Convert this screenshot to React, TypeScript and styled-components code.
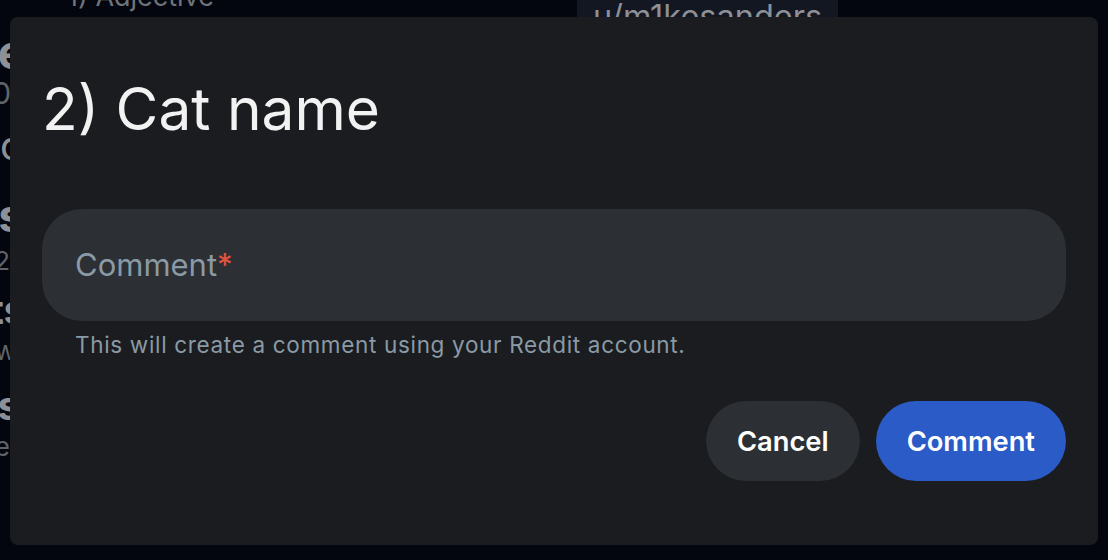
import React from "react";
import styled, { createGlobalStyle } from "styled-components";

const Global = createGlobalStyle`
  html, body { margin: 0; padding: 0; }
  body {
    background: #04060f;
    font-family: Inter, "Noto Sans", "Liberation Sans", sans-serif;
    overflow: hidden;
    width: 1108px;
    height: 560px;
  }
`;

const Page = styled.div`
  position: relative;
  width: 1108px;
  height: 560px;
  overflow: hidden;
  display: flex;
`;

const SideList = styled.div`
  width: 10px;
  flex-shrink: 0;
  overflow: hidden;
  display: flex;
  flex-direction: column;
  align-items: flex-end;
  color: #8a8e95;
  white-space: nowrap;
`;

const SideItem = styled.div<{ $size: number; $top: number; $cut: number; $bold?: boolean; $dim?: boolean }>`
  font-size: ${(p) => p.$size}px;
  line-height: ${(p) => p.$size}px;
  font-weight: ${(p) => (p.$bold ? 700 : 400)};
  margin-top: ${(p) => p.$top}px;
  margin-right: -${(p) => p.$cut}px;
  color: ${(p) => (p.$dim ? "#5f636a" : "#8d9197")};
`;

const Main = styled.div`
  flex: 1;
  display: flex;
  align-items: flex-start;
`;

const Heading = styled.div`
  margin-left: 57px;
  margin-top: -18px;
  font-size: 27px;
  color: #6f737a;
  line-height: 30px;
`;

const UserTag = styled.div`
  margin-left: 363px;
  margin-top: -3px;
  background: #131722;
  color: #8d9097;
  font-size: 32.5px;
  line-height: 40px;
  padding: 0 16px;
`;

const Dialog = styled.div`
  position: absolute;
  left: 10px;
  top: 17px;
  width: 1088px;
  height: 528px;
  box-sizing: border-box;
  background: #1a1c1f;
  border-radius: 8px;
  padding: 58px 32px 0 32px;
  display: flex;
  flex-direction: column;
`;

const Title = styled.h1`
  margin: 0;
  font-size: 58.6px;
  font-weight: 400;
  line-height: 68px;
  color: #f2f2f2;
`;

const Field = styled.div`
  margin-top: 66px;
  height: 112px;
  border-radius: 40px;
  background: #2c3034;
  display: flex;
  align-items: center;
  padding: 0 33px;
  box-sizing: border-box;
`;

const Placeholder = styled.span`
  font-size: 31px;
  line-height: 36px;
  color: #8a9aa6;
`;

const Required = styled.span`
  color: #e5533f;
`;

const Helper = styled.div`
  margin: 10px 0 0 33px;
  font-size: 22.5px;
  line-height: 28px;
  letter-spacing: 0.67px;
  color: #8a9aa6;
`;

const Actions = styled.div`
  margin-top: 42px;
  display: flex;
  justify-content: flex-end;
  gap: 16px;
`;

const Button = styled.button<{ $primary?: boolean }>`
  height: 80px;
  border: none;
  border-radius: 40px;
  padding: 0 31px;
  font-family: inherit;
  font-size: 27.3px;
  font-weight: 600;
  color: #ffffff;
  background: ${(p) => (p.$primary ? "#2a5bc6" : "#2c3034")};
  cursor: pointer;
`;

export default function App() {
  return (
    <>
      <Global />
      <Page>
        <SideList>
          <SideItem $size={48} $top={28} $cut={16} $bold>Vibe</SideItem>
          <SideItem $size={30} $top={2} $cut={12} $dim>(0)</SideItem>
          <SideItem $size={40} $top={18} $cut={14}>co</SideItem>
          <SideItem $size={46} $top={26} $cut={14} $bold>Posts</SideItem>
          <SideItem $size={26} $top={10} $cut={0} $dim>12</SideItem>
          <SideItem $size={40} $top={16} $cut={16} $bold>Comments</SideItem>
          <SideItem $size={26} $top={8} $cut={6} $dim>view</SideItem>
          <SideItem $size={40} $top={22} $cut={10} $bold>Saves</SideItem>
          <SideItem $size={26} $top={8} $cut={0} $dim>save</SideItem>
        </SideList>
        <Main>
          <Heading>1) Adjective</Heading>
          <UserTag>u/m1kesanders</UserTag>
        </Main>
        <Dialog>
          <Title>2) Cat name</Title>
          <Field>
            <Placeholder>
              Comment<Required>*</Required>
            </Placeholder>
          </Field>
          <Helper>This will create a comment using your Reddit account.</Helper>
          <Actions>
            <Button>Cancel</Button>
            <Button $primary>Comment</Button>
          </Actions>
        </Dialog>
      </Page>
    </>
  );
}
